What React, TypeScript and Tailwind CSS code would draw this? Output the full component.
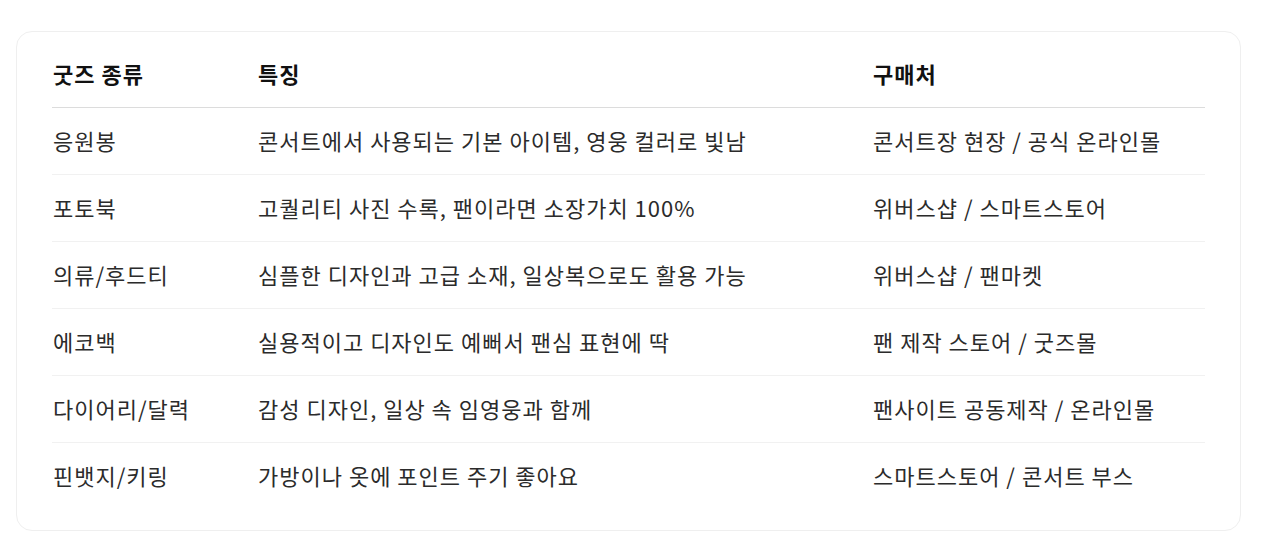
import React from 'react';

const rows = [
  { type: '응원봉', feature: '콘서트에서 사용되는 기본 아이템, 영웅 컬러로 빛남', shop: '콘서트장 현장 / 공식 온라인몰' },
  { type: '포토북', feature: '고퀄리티 사진 수록, 팬이라면 소장가치 100%', shop: '위버스샵 / 스마트스토어' },
  { type: '의류/후드티', feature: '심플한 디자인과 고급 소재, 일상복으로도 활용 가능', shop: '위버스샵 / 팬마켓' },
  { type: '에코백', feature: '실용적이고 디자인도 예뻐서 팬심 표현에 딱', shop: '팬 제작 스토어 / 굿즈몰' },
  { type: '다이어리/달력', feature: '감성 디자인, 일상 속 임영웅과 함께', shop: '팬사이트 공동제작 / 온라인몰' },
  { type: '핀뱃지/키링', feature: '가방이나 옷에 포인트 주기 좋아요', shop: '스마트스토어 / 콘서트 부스' },
];

export default function App() {
  return (
    <div className="min-h-[552px] bg-white pt-[31px] pl-4" style={{ fontFamily: '"Noto Sans CJK KR", "Noto Sans", sans-serif' }}>
      <div className="w-[1225px] rounded-2xl border border-[#efefef] bg-white px-[35px] pt-[9px] pb-[21px]">
        <table className="w-full border-collapse text-left text-[22px] tracking-[1px]">
          <colgroup>
            <col className="w-[206px]" />
            <col className="w-[615px]" />
            <col />
          </colgroup>
          <thead>
            <tr className="border-b border-[#dcdcdc]">
              <th className="h-[66px] pl-px font-bold text-[#111]">굿즈 종류</th>
              <th className="h-[66px] font-bold text-[#111]">특징</th>
              <th className="h-[66px] font-bold text-[#111]">구매처</th>
            </tr>
          </thead>
          <tbody>
            {rows.map((row, i) => (
              <tr key={row.type} className={i < rows.length - 1 ? 'border-b border-[#f1f1f1]' : ''}>
                <td className="h-[67px] pl-px text-[#2b2b2b]">{row.type}</td>
                <td className="h-[67px] text-[#2b2b2b]">{row.feature}</td>
                <td className="h-[67px] text-[#2b2b2b]">{row.shop}</td>
              </tr>
            ))}
          </tbody>
        </table>
      </div>
    </div>
  );
}
